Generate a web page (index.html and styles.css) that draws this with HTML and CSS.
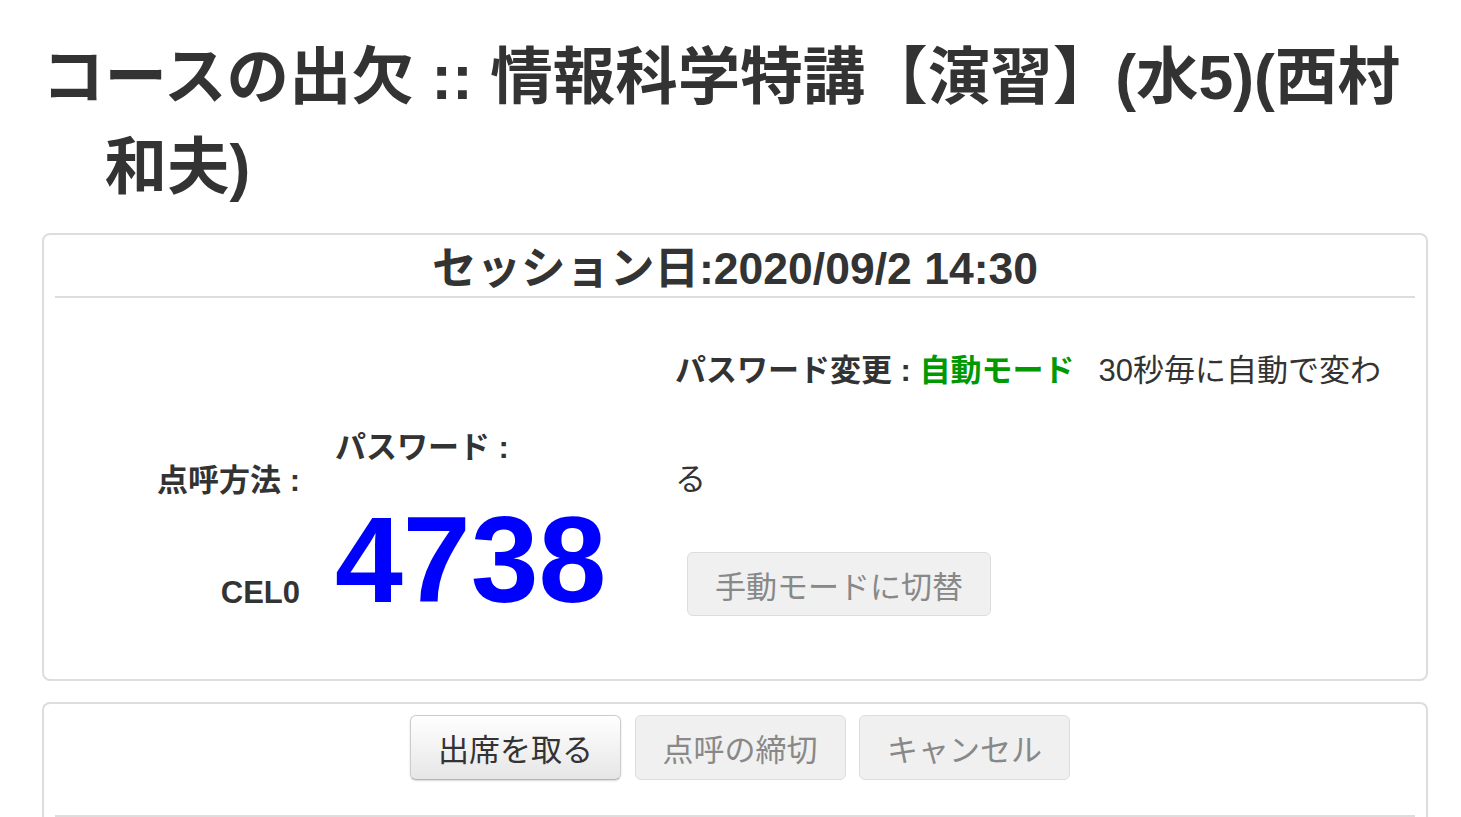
FILE: index.html
```html
<!DOCTYPE html>
<html lang="ja">
<head>
<meta charset="utf-8">
<title>コースの出欠</title>
<link rel="stylesheet" href="styles.css">
</head>
<body>
<div class="page">
  <h2 class="title">コースの出欠 :: 情報科学特講【演習】(水5)(西村和夫)</h2>

  <div class="box">
    <div class="box-head">セッション日:2020/09/2 14:30</div>
    <div class="box-body">
      <div class="col col-label">
        <div class="label-line">点呼方法 :</div>
        <div class="label-line">CEL0</div>
      </div>
      <div class="col col-pass">
        <div class="pass-label">パスワード :</div>
        <div class="pass-value">4738</div>
      </div>
      <div class="col col-mode">
        <div class="mode-text"><b>パスワード変更 : </b><span class="auto">自動モード</span><span class="mode-desc">30秒毎に自動で変わ<br>る</span></div>
        <button class="btn btn-disabled btn-manual" disabled>手動モードに切替</button>
      </div>
    </div>
  </div>

  <div class="box box-actions">
    <div class="actions">
      <button class="btn btn-primary">出席を取る</button>
      <button class="btn btn-disabled" disabled>点呼の締切</button>
      <button class="btn btn-disabled" disabled>キャンセル</button>
    </div>
  </div>
</div>
</body>
</html>
```

FILE: styles.css
```css
html, body {
  margin: 0;
  padding: 0;
  background: #fff;
}

body {
  font-family: "Liberation Sans", Arial, "Noto Sans CJK JP", sans-serif;
  color: #333;
  overflow: hidden;
}

.page {
  padding: 0 33px 0 42px;
}

.title {
  font-size: 62.5px;
  line-height: 90px;
  font-weight: bold;
  margin: 32px 0 21px 0;
  padding-left: 1em;
  text-indent: -1em;
}

.box {
  border: 2px solid #ddd;
  border-radius: 8px;
  padding: 0 11px;
}

.box-head {
  height: 57px;
  padding-top: 4px;
  line-height: 60px;
  font-size: 44.5px;
  font-weight: bold;
  text-align: center;
  border-bottom: 2px solid #ddd;
}

.box-body {
  height: 381px;
  display: flex;
  font-size: 31px;
}

.col-label {
  width: 245px;
  text-align: right;
  font-weight: bold;
  margin-top: 127px;
}

.label-line {
  line-height: 112px;
}

.col-pass {
  width: 305px;
  margin-left: 35px;
  margin-top: 130px;
}

.pass-label {
  font-weight: bold;
  line-height: 40px;
}

.pass-value {
  font-family: "Liberation Sans", Arial, sans-serif;
  font-size: 122px;
  line-height: 120px;
  font-weight: bold;
  color: #00f;
  margin-top: 32px;
}

.col-mode {
  flex: 1;
  margin-left: 35px;
  margin-top: 18px;
}

.mode-text {
  line-height: 109px;
}

.auto {
  color: #090;
  font-weight: bold;
}

.mode-desc {
  margin-left: 24px;
}

.btn {
  font-family: "Liberation Sans", Arial, "Noto Sans CJK JP", sans-serif;
  font-size: 31px;
  height: 65px;
  padding: 0 27px;
  border-radius: 6px;
  border: 1px solid #ccc;
  box-sizing: border-box;
  vertical-align: middle;
}

.btn-primary {
  color: #333;
  background: linear-gradient(#ffffff, #e6e6e6);
  border-color: #ccc #ccc #b3b3b3;
  box-shadow: 0 1px 2px rgba(0, 0, 0, 0.15);
}

.btn-disabled {
  color: #888;
  background: #f0f0f0;
  border-color: #ddd;
}

.btn-manual {
  display: block;
  margin: 18px 0 0 12px;
  padding: 0 27px;
  width: 304px;
  height: 64px;
}

.box-actions {
  margin-top: 21px;
  border-bottom: none;
  border-bottom-left-radius: 0;
  border-bottom-right-radius: 0;
}

.actions {
  text-align: center;
  padding: 11px 0 35px 10px;
  border-bottom: 2px solid #ddd;
}

.actions .btn {
  width: 211px;
  margin: 0 4.5px;
}
```
